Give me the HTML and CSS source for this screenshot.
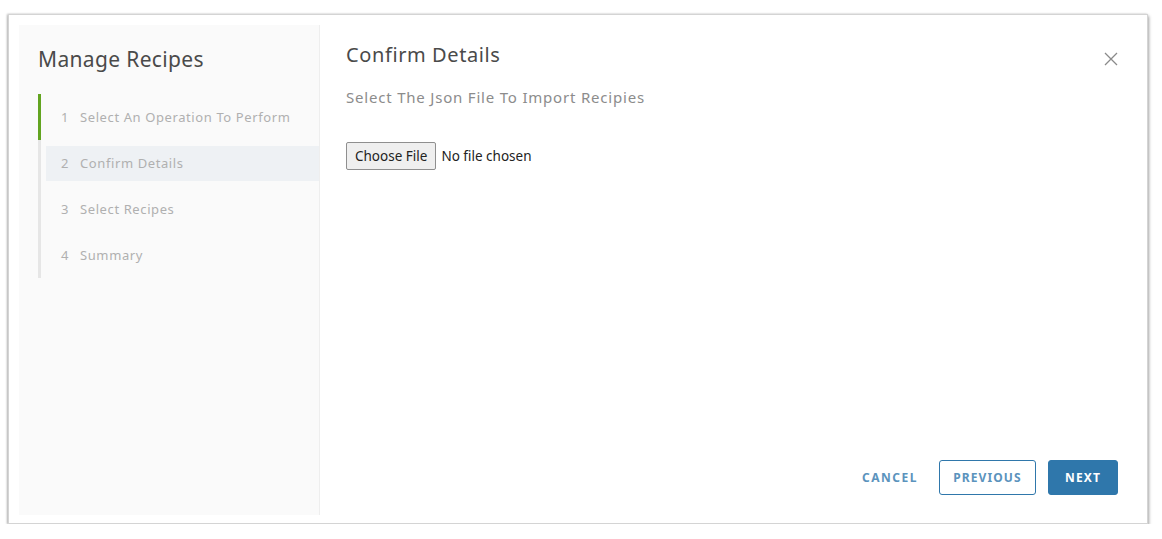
FILE: index.html
```html
<!DOCTYPE html>
<html>
<head>
<meta charset="utf-8">
<link rel="stylesheet" href="styles.css">
</head>
<body>
<div class="modal">
  <aside class="sidebar">
    <h2 class="side-title">Manage Recipes</h2>
    <ol class="steps">
      <li class="step done"><div class="step-inner"><span class="num">1</span>Select An Operation To Perform</div></li>
      <li class="step"><div class="step-inner active"><span class="num">2</span>Confirm Details</div></li>
      <li class="step"><div class="step-inner"><span class="num">3</span>Select Recipes</div></li>
      <li class="step"><div class="step-inner"><span class="num">4</span>Summary</div></li>
    </ol>
  </aside>
  <main class="content">
    <div class="head">
      <h3 class="title">Confirm Details</h3>
      <button class="close" aria-label="Close">
        <svg width="14" height="14" viewBox="0 0 14 14"><path d="M1 1 L13 13 M13 1 L1 13" stroke="#8a8a8a" stroke-width="1.3" fill="none"/></svg>
      </button>
    </div>
    <p class="subtitle">Select The Json File To Import Recipies</p>
    <div class="file-row">
      <input type="file" class="file">
    </div>
    <div class="footer">
      <button class="btn link">CANCEL</button>
      <button class="btn outline">PREVIOUS</button>
      <button class="btn primary">NEXT</button>
    </div>
  </main>
</div>
</body>
</html>
```

FILE: styles.css
```css
html, body {
  margin: 0;
  padding: 0;
  background: #ffffff;
}
body {
  font-family: "Noto Sans", "Liberation Sans", sans-serif;
}
.modal {
  box-sizing: border-box;
  margin: 14px 0 0 8px;
  width: 1140px;
  height: 510px;
  border: 1px solid #d4d4d4;
  box-shadow: 1px 2px 3px rgba(0,0,0,0.35), -1px 0 2px rgba(0,0,0,0.25);
  padding: 10px 0 8px 10px;
  display: flex;
  background: #fff;
}
.sidebar {
  background: #fafafa;
  border-right: 1px solid #eeeeee;
  padding: 0 0 0 19px;
  box-sizing: border-box;
  width: 301px;
}
.side-title {
  margin: 19px 0 0 0;
  font-size: 21px;
  font-weight: 400;
  color: #4a4a4a;
  line-height: 30px;
  letter-spacing: 0.35px;
}
.steps {
  list-style: none;
  margin: 20px 0 0 0;
  padding: 0;
}
.step {
  height: 46px;
  border-left: 3px solid #e6e6e6;
  padding-left: 5px;
  display: flex;
  align-items: center;
}
.step.done {
  border-left-color: #62a420;
}
.step-inner {
  flex: 1;
  height: 35px;
  display: flex;
  align-items: center;
  padding-left: 15px;
  font-size: 13px;
  color: #b0b0b0;
  letter-spacing: 0.6px;
}
.step-inner.active {
  background: #eef1f4;
}
.num {
  width: 19px;
}
.content {
  flex: 1;
  display: flex;
  flex-direction: column;
  padding: 0 29px 20px 26px;
}
.head {
  display: flex;
  justify-content: space-between;
  align-items: flex-start;
}
.title {
  margin: 15px 0 0 0;
  font-size: 20px;
  font-weight: 400;
  color: #4a4a4a;
  line-height: 30px;
  letter-spacing: 0.6px;
}
.close {
  margin: 27px 0 0 0;
  border: none;
  background: none;
  padding: 0;
  width: 14px;
  height: 14px;
  display: block;
}
.subtitle {
  margin: 17px 0 0 0;
  font-size: 15px;
  color: #8c8c8c;
  line-height: 20px;
  letter-spacing: 0.8px;
}
.file-row {
  margin-top: 35px;
}
.file {
  font-family: "Noto Sans", "Liberation Sans", sans-serif;
  font-size: 13.5px;
  color: #222;
}
.file::file-selector-button {
  font-family: "Noto Sans", "Liberation Sans", sans-serif;
  font-size: 13.5px;
  height: 28px;
  padding: 0 8px;
  border: 1px solid #8f8f8f;
  border-radius: 2px;
  background: #efefef;
  color: #222;
  margin-right: 5px;
}
.footer {
  margin-top: auto;
  display: flex;
  justify-content: flex-end;
  align-items: center;
  gap: 12px;
}
.btn {
  font-family: "Noto Sans", "Liberation Sans", sans-serif;
  font-size: 12px;
  font-weight: 700;
  letter-spacing: 1.1px;
  height: 35px;
  border-radius: 3px;
  padding: 0 12px;
  cursor: pointer;
}
.btn.link {
  background: none;
  border: 1px solid transparent;
  color: #5b93bd;
  margin-right: -4px;
  letter-spacing: 1.5px;
}
.btn.outline {
  background: #fff;
  border: 1px solid #2f77ab;
  color: #5b93bd;
  width: 97px;
}
.btn.primary {
  background: #2f77ab;
  border: 1px solid #2f77ab;
  color: #fff;
  width: 70px;
}
```
